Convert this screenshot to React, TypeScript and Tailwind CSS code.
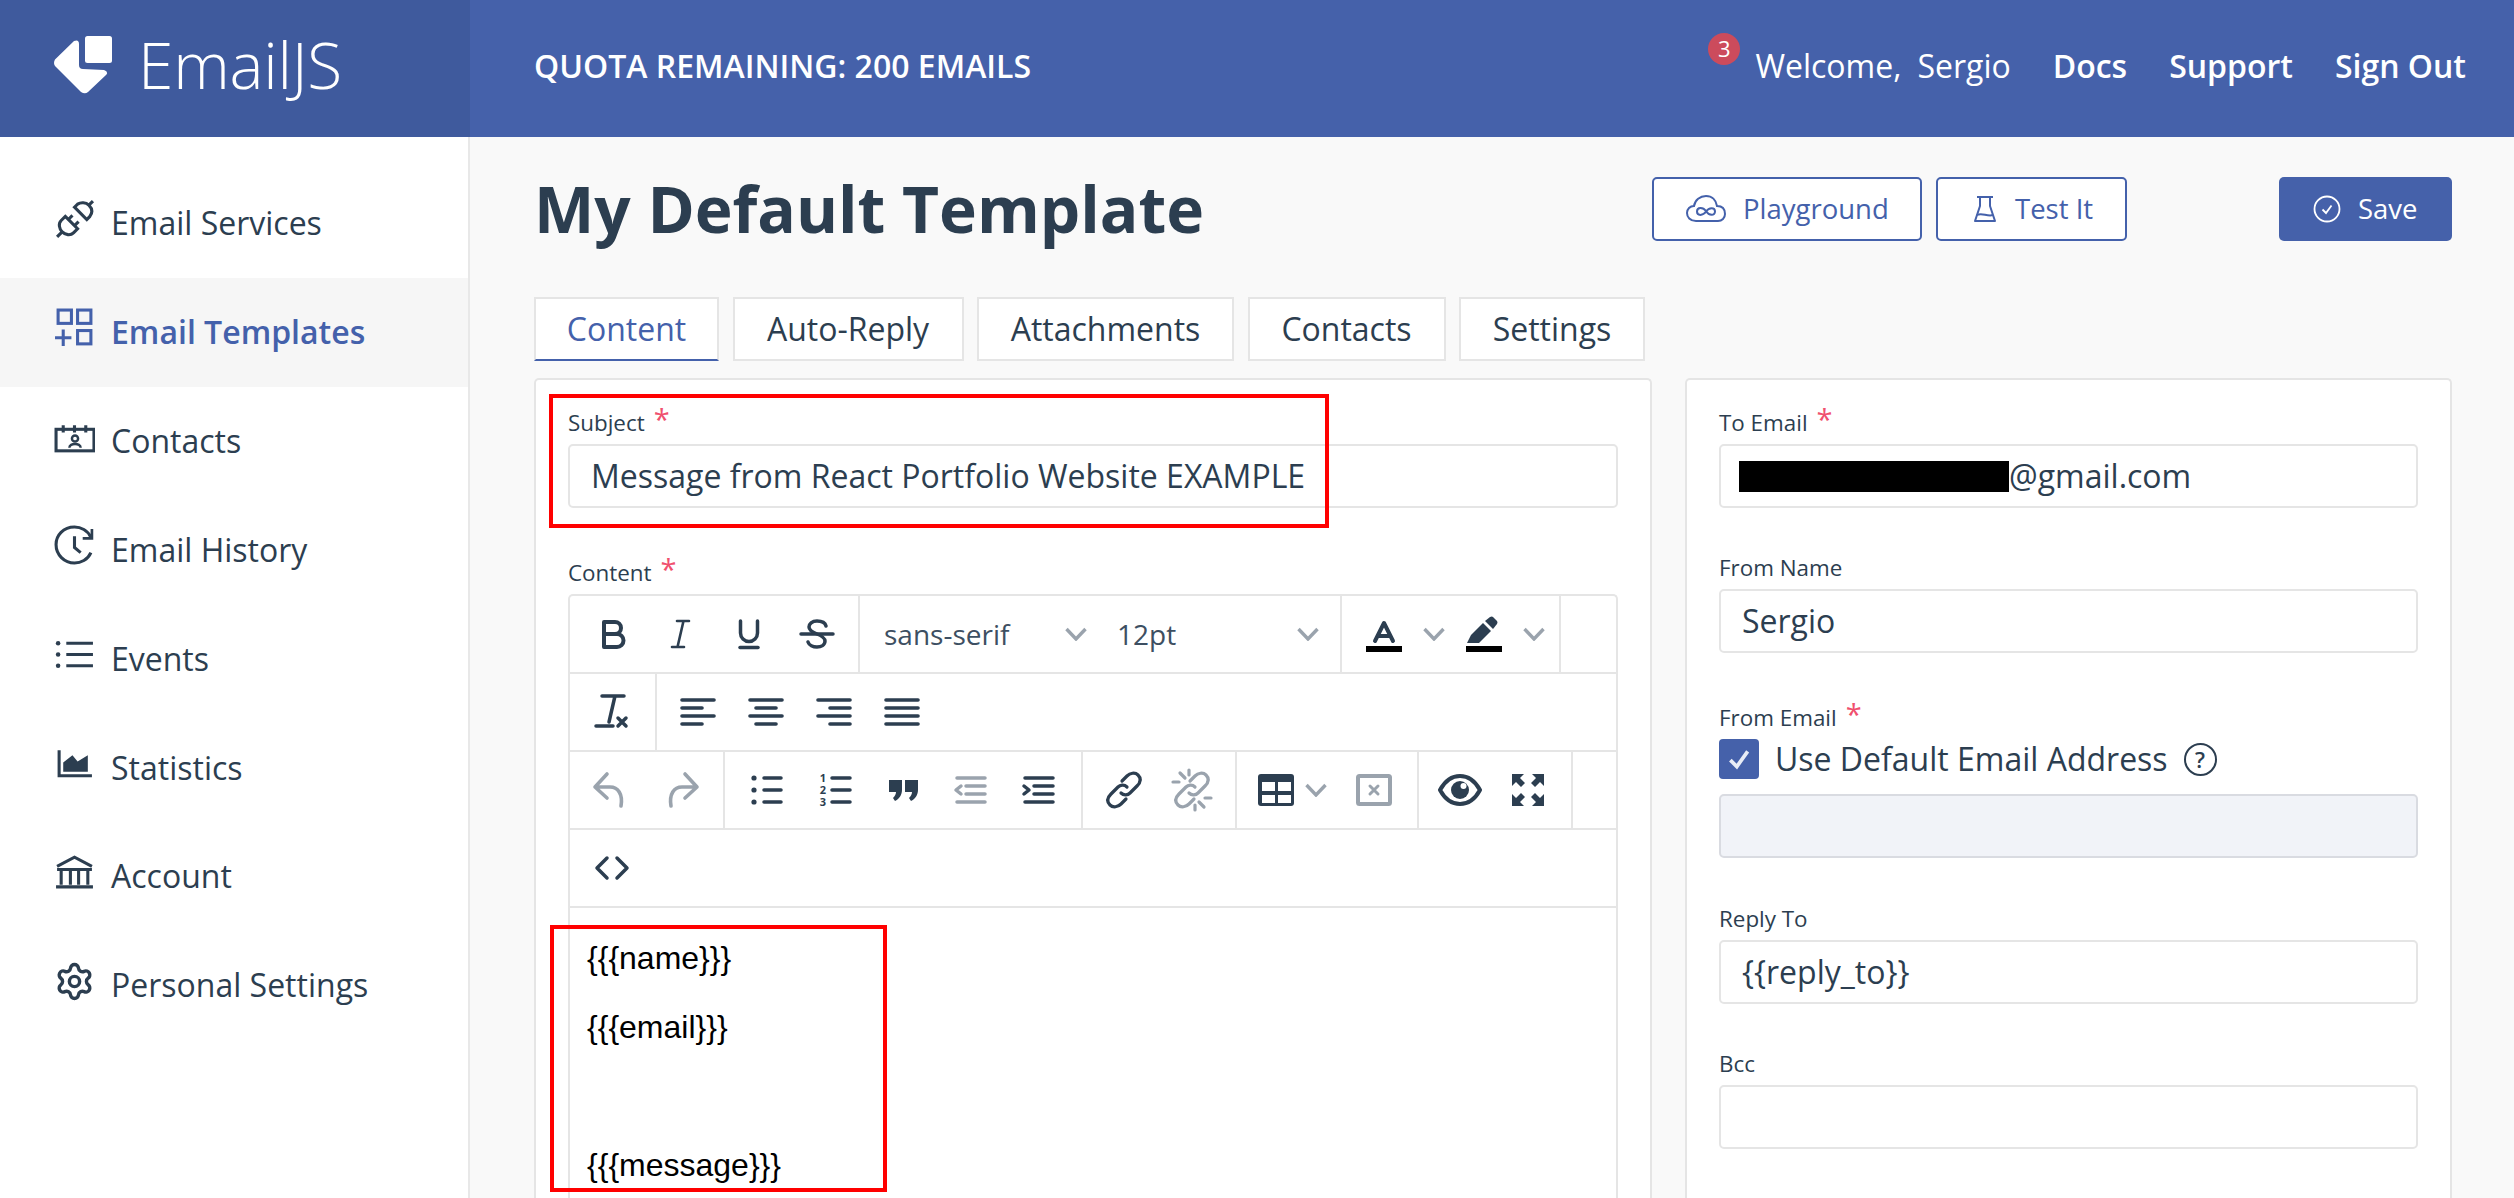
import React from 'react';
import { Settings } from 'lucide-react';

const dark = '#2c3e50';
const gray = '#9aa3ad';

// toolbar icons are drawn on a 44x44 box
const Ico = ({ children, color = dark, sw = 3.5 }: { children: React.ReactNode; color?: string; sw?: number }) => (
    <svg viewBox="0 0 44 44" className="w-[44px] h-[44px] shrink-0" fill="none" stroke={color} strokeWidth={sw} strokeLinecap="round" strokeLinejoin="round">
        {children}
    </svg>
);

const Chevron = () => (
    <svg viewBox="0 0 24 14" className="w-[24px] h-[14px] shrink-0" fill="none" stroke={gray} strokeWidth="3.4">
        <path d="M2.5 2 L12 12 L21.5 2" />
    </svg>
);

const AlignIcon = ({ bars }: { bars: [number, number][] }) => (
    <Ico sw={3.6}>
        {bars.map(([a, b], i) => (
            <path key={i} d={`M${a} ${10 + i * 8} H${b}`} />
        ))}
    </Ico>
);

const Corner = ({ t }: { t: string }) => (
    <path transform={t} d="M6 6 H18 L14 10 L19 15 L15 19 L10 14 L6 18 Z" fill={dark} stroke="none" />
);

const chain = (
    <>
        <path d="M19 25 C22 28 26 27 28 25 L35 18 C39 14 39 10 36 7 C33 4 28 5 25 8 L20 13" />
        <path d="M25 19 C22 16 18 17 16 19 L9 26 C5 30 5 34 8 37 C11 40 16 39 19 36 L24 31" />
    </>
);

const Group = ({ className, children }: { className: string; children: React.ReactNode }) => (
    <div className={`flex items-center h-full border-r-2 border-[#e5e5e5] ${className}`}>{children}</div>
);

const Row = ({ children }: { children: React.ReactNode }) => (
    <div className="flex items-center h-[78px] border-b-2 border-[#e5e5e5]">{children}</div>
);

const Star = () => <span className="ml-[9px] text-[29px] leading-[26px] text-[#f0506e]">*</span>;

const Label = ({ text, required }: { text: string; required?: boolean }) => (
    <div className="flex items-start h-[34px] mb-[4px] text-[22.4px] leading-[34px] text-[#2c3e50]">
        <span>{text}</span>
        {required && <Star />}
    </div>
);

const Input = ({ children, disabled }: { children?: React.ReactNode; disabled?: boolean }) => (
    <div className={`flex items-center h-[64px] px-[21px] border-2 rounded-[5px] text-[32px] text-[#2c3e50] ${disabled ? 'bg-[#f1f3f8] border-[#d9dbe1]' : 'bg-white border-[#e5e5e5]'}`}>
        {children}
    </div>
);

const navItems: { label: string; active?: boolean; icon: React.ReactNode }[] = [
    {
        label: 'Email Services',
        icon: (
            <>
                <path d="M3 37 L8 32 M34 6 L38 2" />
                <path d="M11 17 L23 29 L19 33 C16 36 11 35 8 32 C5 29 4 24 7 21 Z" />
                <path d="M20 8 L32 20 L35 17 C38 13 37 9 34 6 C31 3 26 3 23 5 Z" />
                <path d="M14 20 L18 16 M20 26 L24 22" />
            </>
        ),
    },
    {
        label: 'Email Templates',
        active: true,
        icon: (
            <>
                <rect x="4" y="2" width="13" height="13" />
                <rect x="23" y="2" width="13" height="13" />
                <rect x="23" y="22" width="13" height="13" />
                <path d="M1 29 H17 M9 21 V37" />
            </>
        ),
    },
    {
        label: 'Contacts',
        icon: (
            <>
                <rect x="2" y="12" width="37" height="21" />
                <path d="M9 8 V15 M20 8 V15 M31 8 V15" />
                <circle cx="20.5" cy="21" r="3" strokeWidth="2.4" />
                <path d="M15 30 C15 25 26 25 26 30" strokeWidth="2.4" />
            </>
        ),
    },
    {
        label: 'Email History',
        icon: (
            <>
                <path d="M36 12 C33 5 26 2 20 2 C9 2 2 10 2 19 C2 29 10 37 20 37 C26 37 33 34 36 27" />
                <path d="M37 4 L37 13 L28 13" strokeWidth="2.6" />
                <path d="M20 11 V22 L26 27" />
            </>
        ),
    },
    {
        label: 'Events',
        icon: (
            <>
                <path d="M12 9 H38 M12 20 H38 M12 31 H38" />
                <circle cx="4" cy="9" r="2.2" fill={dark} stroke="none" />
                <circle cx="4" cy="20" r="2.2" fill={dark} stroke="none" />
                <circle cx="4" cy="31" r="2.2" fill={dark} stroke="none" />
            </>
        ),
    },
    {
        label: 'Statistics',
        icon: (
            <>
                <path d="M5 7 V32 H37" />
                <path d="M9 28 V19 L18 12 L23 18 L33 12 V28 Z" fill={dark} stroke="none" />
            </>
        ),
    },
    {
        label: 'Account',
        icon: (
            <>
                <path d="M3 14 L20 5 L37 14 M3 17 H37" />
                <path d="M7 18 V32 M16 18 V32 M24 18 V32 M33 18 V32 M2 34 H38" />
            </>
        ),
    },
];

const App = () => {
    return (
        <div className="h-screen overflow-hidden flex flex-col bg-[#f9f9f9] font-['Open_Sans',sans-serif] text-[#2c3e50]">
            {/* top bar */}
            <header className="flex h-[137px] shrink-0 bg-[#4561aa] text-white">
                <div className="flex items-center w-[470px] pl-[54px] pb-[7px] bg-[#3f5a9d]">
                    <svg viewBox="0 0 58 58" className="w-[58px] h-[58px] shrink-0" fill="#fff">
                        <rect x="31" y="0" width="27" height="27" rx="2.5" />
                        <path d="M1 23.5 L20 5 Q25 3 25 8 V29 Q25 33 29 33 L50 34 Q55 36 52 39 L34 56 Q31 58.5 27 56 L1 30 Q-1 27 1 23.5 Z" />
                    </svg>
                    <span className="ml-[26px] text-[64px] font-light leading-none tracking-[-0.2px]">EmailJS</span>
                </div>
                <div className="flex flex-1 items-center justify-between pl-[64px] pr-[48px] pb-[6px]">
                    <span className="text-[32px] font-semibold">QUOTA REMAINING: 200 EMAILS</span>
                    <div className="flex items-center gap-[42px] text-[32px]">
                        <div className="relative flex gap-[16px]">
                            <span className="absolute left-[-47px] top-[-9px] flex items-center justify-center w-[32px] h-[32px] rounded-full bg-[#cc4b5c] text-[22px]">3</span>
                            <span>Welcome,</span>
                            <span>Sergio</span>
                        </div>
                        <span className="font-semibold">Docs</span>
                        <span className="font-semibold">Support</span>
                        <span className="font-semibold">Sign Out</span>
                    </div>
                </div>
            </header>

            <div className="flex flex-1 min-h-0">
                {/* sidebar */}
                <aside className="w-[470px] shrink-0 pt-[32px] bg-white border-r-2 border-[#e8e8e8]">
                    {navItems.map((item) => (
                        <div key={item.label} className={`flex items-center gap-[16px] h-[108.85px] pl-[54px] text-[32px] ${item.active ? 'bg-[#f6f6f6] font-semibold text-[#4461ab]' : ''}`}>
                            <svg viewBox="0 0 40 40" className="w-[41px] h-[41px] shrink-0 mt-[-8px]" fill="none" stroke={item.active ? '#4461ab' : dark} strokeWidth="3">
                                {item.icon}
                            </svg>
                            <span>{item.label}</span>
                        </div>
                    ))}
                    <div className="flex items-center gap-[16px] h-[108.85px] pl-[54px] text-[32px]">
                        <Settings className="w-[41px] h-[41px] shrink-0 mt-[-8px]" strokeWidth={2} />
                        <span>Personal Settings</span>
                    </div>
                </aside>

                <main className="flex flex-col flex-1 min-w-0 pl-[64px] pr-[62px] pt-[40px]">
                    <div className="flex items-center h-[64px]">
                        <h1 className="text-[64px] font-bold leading-none">My Default Template</h1>
                        <div className="flex items-center gap-[14px] ml-auto text-[27.5px] text-[#4461ab]">
                            <button className="flex items-center gap-[17px] w-[270px] h-[64px] pl-[32px] bg-white border-2 border-[#4461ab] rounded-[5px]">
                                <svg viewBox="0 0 40 30" className="w-[40px] h-[30px]" fill="none" stroke="#4461ab" strokeWidth="2">
                                    <path d="M10 27 C4 27 1 23 1 19 C1 15 4 12 8 12 C9 6 14 2 20 2 C26 2 30 6 31 12 C36 12 39 15 39 20 C39 24 36 27 32 27 Z" />
                                    <path d="M20 17 C17 13 11 13 11 17.5 C11 22 17 22 20 17.5 C23 13 29 13 29 17.5 C29 22 23 22 20 17" />
                                </svg>
                                Playground
                            </button>
                            <button className="flex items-center gap-[18px] w-[191px] h-[64px] pl-[35px] bg-white border-2 border-[#4461ab] rounded-[5px]">
                                <svg viewBox="0 0 24 28" className="w-[24px] h-[28px]" fill="none" stroke="#4461ab" strokeWidth="2">
                                    <path d="M4 2 H20 M7 2 V11 L2 26 H22 L17 11 V2" strokeLinejoin="round" />
                                    <path d="M4 20 C9 17 14 22 20 20" />
                                </svg>
                                Test It
                            </button>
                            <button className="flex items-center gap-[17px] w-[173px] h-[64px] ml-[138px] pl-[34px] bg-[#4561aa] text-white rounded-[5px]">
                                <svg viewBox="0 0 28 28" className="w-[28px] h-[28px]" fill="none" stroke="#fff" strokeWidth="1.8">
                                    <circle cx="14" cy="14" r="12.5" />
                                    <path d="M9.5 14.5 L13 18 L18.5 10.5" />
                                </svg>
                                Save
                            </button>
                        </div>
                    </div>

                    {/* tabs */}
                    <div className="flex gap-[13.5px] mt-[56px] h-[64px] text-[32px]">
                        <div className="flex items-center justify-center w-[185px] bg-white border-2 border-[#e5e5e5] border-b-[#4461ab] text-[#4461ab]">Content</div>
                        <div className="flex items-center justify-center w-[231px] bg-white border-2 border-[#e5e5e5]">Auto-Reply</div>
                        <div className="flex items-center justify-center w-[257px] bg-white border-2 border-[#e5e5e5]">Attachments</div>
                        <div className="flex items-center justify-center w-[198px] bg-white border-2 border-[#e5e5e5]">Contacts</div>
                        <div className="flex items-center justify-center w-[186px] bg-white border-2 border-[#e5e5e5]">Settings</div>
                    </div>

                    <div className="flex flex-1 min-h-0 gap-[33px] mt-[17px]">
                        {/* left panel */}
                        <div className="relative w-[1118px] shrink-0 bg-white border-2 border-b-0 border-[#e5e5e5] rounded-t-[5px] pt-[26px] pl-[32px] pr-[32px]">
                            <Label text="Subject" required />
                            <Input>Message from React Portfolio Website EXAMPLE</Input>
                            <div className="h-[48px]" />
                            <Label text="Content" required />
                            <div className="border-2 border-b-0 border-[#e5e5e5] rounded-t-[5px] h-[700px] bg-white">
                                <Row>
                                    <Group className="pl-[21px] pr-[19px] gap-6">
                                        <Ico sw={4}><path d="M13 10 H24 A6 6 0 0 1 24 22 H13 Z M13 22 H26 A6.5 6.5 0 0 1 26 35 H13 Z" /></Ico>
                                        <Ico sw={2.6}><path d="M18 9 H30 M13 35 H25 M24.5 9 L18.5 35" /></Ico>
                                        <Ico>
                                            <path d="M13.5 9 V21 A8.5 8.5 0 0 0 30.5 21 V9" />
                                            <path d="M13 35.5 H31" />
                                        </Ico>
                                        <Ico>
                                            <path d="M6 22 H38" />
                                            <path d="M31 14 C30 10 26 9 22 9 C17 9 14 12 14 15 C14 18 17 20 22 22 C27 24 30 26 30 29 C30 33 26 35 22 35 C18 35 14 33 13 30" />
                                        </Ico>
                                    </Group>
                                    <Group className="pl-[24px] pr-[20px] text-[28px] text-[#3d4f62]">
                                        <div className="flex items-center justify-between w-[204px]">sans-serif<Chevron /></div>
                                        <div className="flex items-center justify-between w-[203px] ml-[29px]">12pt<Chevron /></div>
                                    </Group>
                                    <Group className="pl-[20px] pr-[13px]">
                                        <Ico sw={4}>
                                            <path d="M13 29 L22 11 L31 29 M16 24 H28" />
                                            <rect x="4" y="34" width="36" height="6" fill="#000" stroke="none" />
                                        </Ico>
                                        <div className="ml-[16px] mr-[16px]"><Chevron /></div>
                                        <Ico>
                                            <path d="M5 31 L9 23 L21 11 L29 19 L17 31 Z" fill={dark} stroke="none" />
                                            <path d="M23 9 L28 5 Q30 4 31 5 L35 9 Q36 10 35 12 L31 17 Z" fill={dark} stroke="none" />
                                            <rect x="4" y="34" width="36" height="6" fill="#000" stroke="none" />
                                        </Ico>
                                        <div className="ml-[16px]"><Chevron /></div>
                                    </Group>
                                </Row>
                                <Row>
                                    <Group className="pl-[20px] pr-[21px]">
                                        <Ico>
                                            <path d="M12 6 H34 M25 6 L19 32 M6 36 H23" />
                                            <path d="M28 28 L36 36 M36 28 L28 36" />
                                        </Ico>
                                    </Group>
                                    <div className="flex items-center gap-6 pl-[19px]">
                                        <AlignIcon bars={[[6, 38], [6, 26], [6, 38], [6, 26]]} />
                                        <AlignIcon bars={[[6, 38], [12, 32], [6, 38], [12, 32]]} />
                                        <AlignIcon bars={[[6, 38], [18, 38], [6, 38], [18, 38]]} />
                                        <AlignIcon bars={[[6, 38], [6, 38], [6, 38], [6, 38]]} />
                                    </div>
                                </Row>
                                <Row>
                                    <Group className="pl-[18px] pr-[19px] gap-[28px]">
                                        <Ico color={gray} sw={3.6}><path d="M19 6 L7 19 L19 30 M7 19 H22 C30 19 35 26 33 38" /></Ico>
                                        <Ico color={gray} sw={3.6}><path d="M25 6 L37 19 L25 30 M37 19 H22 C14 19 9 26 11 38" /></Ico>
                                    </Group>
                                    <Group className="pl-[20px] pr-[20px] gap-6">
                                        <Ico>
                                            <path d="M19 10 H36 M19 22 H36 M19 34 H36" />
                                            <circle cx="9" cy="10" r="2.6" fill={dark} stroke="none" />
                                            <circle cx="9" cy="22" r="2.6" fill={dark} stroke="none" />
                                            <circle cx="9" cy="34" r="2.6" fill={dark} stroke="none" />
                                        </Ico>
                                        <Ico>
                                            <path d="M19 10 H37 M19 22 H37 M19 34 H37" />
                                            <text x="10" y="14" textAnchor="middle" fontSize="11" fontWeight="700" fill={dark} stroke="none">1</text>
                                            <text x="10" y="26" textAnchor="middle" fontSize="11" fontWeight="700" fill={dark} stroke="none">2</text>
                                            <text x="10" y="38" textAnchor="middle" fontSize="11" fontWeight="700" fill={dark} stroke="none">3</text>
                                        </Ico>
                                        <Ico>
                                            <path d="M8 12 H21 V22 C21 27 18 31 14 33 L12 30 C14 28 15 26 15 24 H8 Z" fill={dark} stroke="none" />
                                            <path d="M24 12 H37 V22 C37 27 34 31 30 33 L28 30 C30 28 31 26 31 24 H24 Z" fill={dark} stroke="none" />
                                        </Ico>
                                        <Ico color={gray}>
                                            <path d="M8 10 H36 M17 18 H36 M17 26 H36 M8 34 H36" />
                                            <path d="M12 18 L7 22 L12 26" />
                                        </Ico>
                                        <Ico>
                                            <path d="M8 10 H36 M17 18 H36 M17 26 H36 M8 34 H36" />
                                            <path d="M7 18 L12 22 L7 26" />
                                        </Ico>
                                    </Group>
                                    <Group className="pl-[19px] pr-[21px] gap-6">
                                        <Ico sw={3.2}>{chain}</Ico>
                                        <Ico color={gray} sw={3.2}>
                                            {chain}
                                            <path d="M10 5 L15 10 M3 14 H9 M19 2 V7 M29 34 L34 39 M35 30 H41 M25 37 V42" />
                                        </Ico>
                                    </Group>
                                    <Group className="pl-[17px] pr-[21px]">
                                        <Ico sw={0}>
                                            <rect x="4" y="6" width="36" height="32" rx="3" fill={dark} />
                                            <rect x="8" y="14" width="13" height="9" fill="#fff" />
                                            <rect x="24" y="14" width="13" height="9" fill="#fff" />
                                            <rect x="8" y="27" width="13" height="8" fill="#fff" />
                                            <rect x="24" y="27" width="13" height="8" fill="#fff" />
                                        </Ico>
                                        <div className="ml-[6px]"><Chevron /></div>
                                        <div className="ml-[24px]">
                                            <Ico color={gray} sw={4}>
                                                <rect x="6" y="8" width="32" height="28" rx="1.5" />
                                                <path d="M18 18 L26 26 M26 18 L18 26" strokeWidth="3" />
                                            </Ico>
                                        </div>
                                    </Group>
                                    <Group className="pl-[19px] pr-[21px] gap-6">
                                        <Ico sw={4}>
                                            <path d="M2 22 C8 11 15 8 22 8 C29 8 36 11 42 22 C36 33 29 36 22 36 C15 36 8 33 2 22 Z" />
                                            <circle cx="22" cy="22" r="9" fill={dark} stroke="none" />
                                            <circle cx="25.5" cy="18" r="3" fill="#fff" stroke="none" />
                                        </Ico>
                                        <Ico sw={0}>
                                            <Corner t="" />
                                            <Corner t="translate(44 0) scale(-1 1)" />
                                            <Corner t="translate(0 44) scale(1 -1)" />
                                            <Corner t="translate(44 44) scale(-1 -1)" />
                                        </Ico>
                                    </Group>
                                </Row>
                                <Row>
                                    <div className="pl-[20px]">
                                        <Ico><path d="M17 12 L7 22 L17 32 M27 12 L37 22 L27 32" /></Ico>
                                    </div>
                                </Row>
                                <div className="pt-[16px] pl-[17px] font-['Liberation_Sans',Arial,sans-serif] text-[32px] leading-[69px] text-black">
                                    <p>{'{{{name}}}'}</p>
                                    <p>{'{{{email}}}'}</p>
                                    <p>&nbsp;</p>
                                    <p>{'{{{message}}}'}</p>
                                </div>
                            </div>
                            {/* red marks drawn over the shot */}
                            <div className="absolute left-[13px] top-[14px] w-[780px] h-[134px] border-[4px] border-[#ff0000]" />
                            <div className="absolute left-[14px] top-[545px] w-[337px] h-[267px] border-[4px] border-[#ff0000]" />
                        </div>

                        {/* right panel */}
                        <div className="flex-1 min-w-0 bg-white border-2 border-b-0 border-[#e5e5e5] rounded-t-[5px] pt-[26px] pl-[32px] pr-[32px]">
                            <Label text="To Email" required />
                            <Input>
                                <span className="w-[270px] h-[31px] -ml-[3px] bg-black" />
                                <span>@gmail.com</span>
                            </Input>
                            <div className="h-[43px]" />
                            <Label text="From Name" />
                            <Input>Sergio</Input>
                            <div className="h-[48px]" />
                            <Label text="From Email" required />
                            <div className="flex items-center h-[40px] mt-[2px] text-[32px]">
                                <span className="flex items-center justify-center w-[40px] h-[40px] rounded-[4px] bg-[#4561aa]">
                                    <svg viewBox="0 0 24 24" className="w-[26px] h-[26px]" fill="none" stroke="#e8ecf6" strokeWidth="3.4"><path d="M4 13 L10 19 L20 5" /></svg>
                                </span>
                                <span className="ml-[16px]">Use Default Email Address</span>
                                <span className="flex items-center justify-center w-[33px] h-[33px] ml-[16px] border-2 border-[#2c3e50] rounded-full text-[22px] font-semibold">?</span>
                            </div>
                            <div className="h-[15px]" />
                            <Input disabled />
                            <div className="h-[44px]" />
                            <Label text="Reply To" />
                            <Input>{'{{reply_to}}'}</Input>
                            <div className="h-[43px]" />
                            <Label text="Bcc" />
                            <Input />
                        </div>
                    </div>
                </main>
            </div>
        </div>
    );
};

export default App;
